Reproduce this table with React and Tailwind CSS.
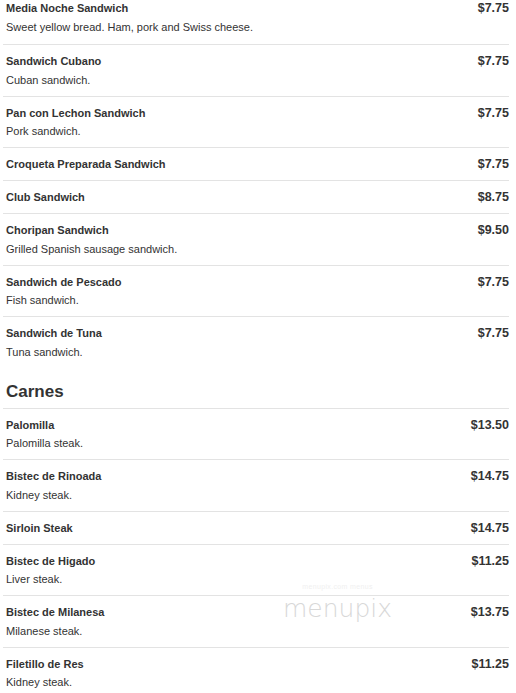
const sandwiches = [
    { name: 'Media Noche Sandwich', desc: 'Sweet yellow bread. Ham, pork and Swiss cheese.', price: '$7.75' },
    { name: 'Sandwich Cubano', desc: 'Cuban sandwich.', price: '$7.75' },
    { name: 'Pan con Lechon Sandwich', desc: 'Pork sandwich.', price: '$7.75' },
    { name: 'Croqueta Preparada Sandwich', price: '$7.75' },
    { name: 'Club Sandwich', price: '$8.75' },
    { name: 'Choripan Sandwich', desc: 'Grilled Spanish sausage sandwich.', price: '$9.50' },
    { name: 'Sandwich de Pescado', desc: 'Fish sandwich.', price: '$7.75' },
    { name: 'Sandwich de Tuna', desc: 'Tuna sandwich.', price: '$7.75' },
];

const carnes = [
    { name: 'Palomilla', desc: 'Palomilla steak.', price: '$13.50' },
    { name: 'Bistec de Rinoada', desc: 'Kidney steak.', price: '$14.75' },
    { name: 'Sirloin Steak', price: '$14.75' },
    { name: 'Bistec de Higado', desc: 'Liver steak.', price: '$11.25' },
    { name: 'Bistec de Milanesa', desc: 'Milanese steak.', price: '$13.75' },
    { name: 'Filetillo de Res', desc: 'Kidney steak.', price: '$11.25' },
];

const Item = ({ item, first }) => (
    <div className={`flex justify-between pl-[3px] ${first ? 'pt-0 pb-[9px]' : 'pt-2 pb-2 border-t border-[#e3e3e3]'}`}>
        <div>
            <div className="text-[11px] leading-4 font-bold text-[#333]">{item.name}</div>
            {item.desc && (
                <div className={`${first ? 'mt-[3px]' : 'mt-[2.5px]'} text-[11px] leading-4 text-[#333]`}>{item.desc}</div>
            )}
        </div>
        <div className="text-[12.5px] leading-4 font-bold text-[#333]">{item.price}</div>
    </div>
);

const App = () => {
    return (
        <div className="relative min-h-screen bg-white" style={{ fontFamily: '"Liberation Sans", Arial, sans-serif' }}>
            <div className="ml-[3px] w-[506px]">
                {sandwiches.map((item, i) => (
                    <Item key={item.name} item={item} first={i === 0} />
                ))}

                <h2 className="pl-[3px] mt-[14px] mb-[6px] text-[17px] leading-5 font-bold text-[#333]">Carnes</h2>

                {carnes.map((item) => (
                    <Item key={item.name} item={item} />
                ))}
            </div>

            {/* watermark */}
            <div className="absolute left-[283px] top-[583px] pointer-events-none select-none text-center">
                <div className="text-[7px] leading-[8px] text-[#f0f0f0] tracking-wider">menupix.com menus</div>
                <div className="mt-[3px] text-[25px] leading-[30px] font-extralight text-[#d8d8d8]" style={{ fontFamily: '"DejaVu Sans", sans-serif' }}>menupix</div>
            </div>
        </div>
    );
};

export default App;
